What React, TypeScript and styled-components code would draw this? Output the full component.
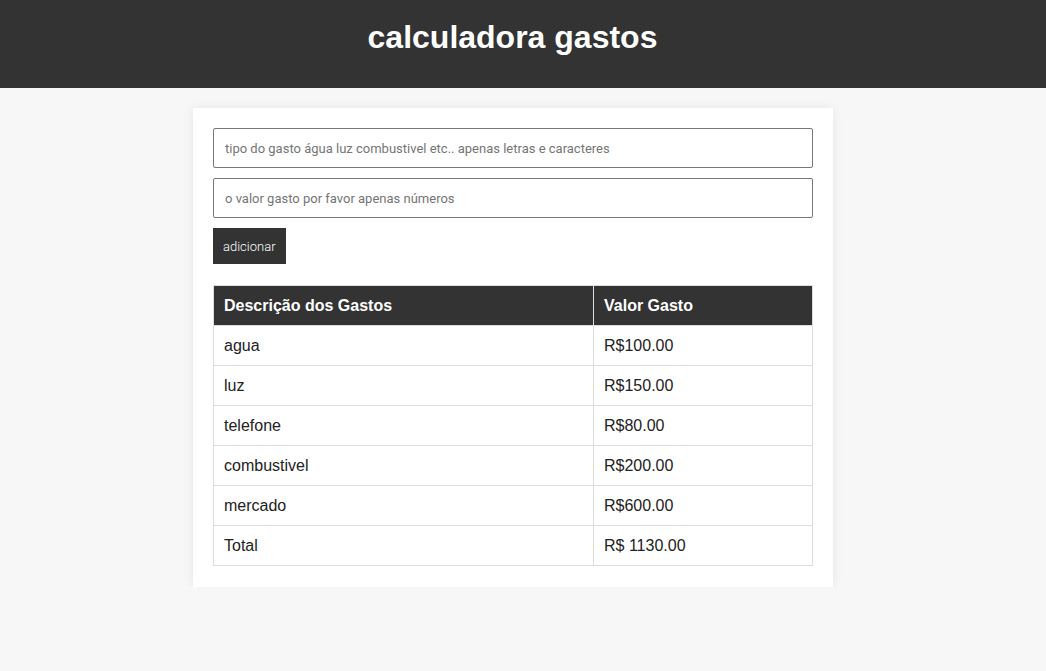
import styled, { createGlobalStyle } from 'styled-components';

const GlobalStyle = createGlobalStyle`
	body {
		margin: 0;
		background: #f7f7f7;
		font-family: 'Liberation Sans', Arial, sans-serif;
	}
`;

const StyledHeader = styled.header`
	background: #333;
	height: 88px;
	display: flex;
	align-items: center;
	justify-content: center;
	padding-right: 21px;
	box-sizing: border-box;
`;

const StyledTitle = styled.h1`
	margin: 0 0 14px;
	color: #fff;
	font-size: 32px;
	font-weight: 700;
`;

const StyledPage = styled.div`
	padding-right: 20px;
`;

const StyledCard = styled.main`
	width: 640px;
	margin: 20px auto 0;
	background: #fff;
	padding: 20px 20px 21px;
	box-sizing: border-box;
	box-shadow: 0 0 10px rgba(0, 0, 0, 0.08);
`;

const StyledForm = styled.form`
	display: flex;
	flex-direction: column;
	align-items: flex-start;
	gap: 10px;
	margin-bottom: 21px;
`;

const StyledInput = styled.input`
	width: 100%;
	height: 40px;
	box-sizing: border-box;
	border: 1px solid #777;
	border-radius: 2px;
	padding: 0 11px;
	font-family: Roboto, sans-serif;
	font-size: 13px;
	font-weight: 400;
	&::placeholder {
		color: #757575;
	}
`;

const StyledButton = styled.button`
	height: 36px;
	padding: 0 10px;
	border: none;
	background: #333;
	color: #fff;
	font-family: Roboto, sans-serif;
	font-size: 13px;
	font-weight: 300;
`;

const StyledTable = styled.table`
	width: 100%;
	border-collapse: collapse;
	font-size: 16px;
`;

const StyledTh = styled.th<{ $width?: number }>`
	background: #333;
	color: #fff;
	text-align: left;
	font-weight: 700;
	height: 40px;
	padding: 0 10px;
	border: 1px solid #ddd;
	width: ${({ $width }) => ($width ? `${$width}px` : 'auto')};
	box-sizing: border-box;
`;

const StyledTd = styled.td`
	height: 40px;
	padding: 1px 10px 0;
	border: 1px solid #ddd;
	color: #222;
	box-sizing: border-box;
`;

const gastos = [
	{ tipo: 'agua', valor: 'R$100.00' },
	{ tipo: 'luz', valor: 'R$150.00' },
	{ tipo: 'telefone', valor: 'R$80.00' },
	{ tipo: 'combustivel', valor: 'R$200.00' },
	{ tipo: 'mercado', valor: 'R$600.00' },
	{ tipo: 'Total', valor: 'R$ 1130.00' },
];

const App = () => {
	return (
		<>
			<GlobalStyle />
			<StyledHeader>
				<StyledTitle>calculadora gastos</StyledTitle>
			</StyledHeader>
			<StyledPage>
				<StyledCard>
					<StyledForm onSubmit={(e) => e.preventDefault()}>
						<StyledInput placeholder="tipo do gasto água luz combustivel etc.. apenas letras e caracteres" />
						<StyledInput placeholder="o valor gasto por favor apenas números" />
						<StyledButton>adicionar</StyledButton>
					</StyledForm>
					<StyledTable>
						<thead>
							<tr>
								<StyledTh $width={380}>Descrição dos Gastos</StyledTh>
								<StyledTh>Valor Gasto</StyledTh>
							</tr>
						</thead>
						<tbody>
							{gastos.map((g) => (
								<tr key={g.tipo}>
									<StyledTd>{g.tipo}</StyledTd>
									<StyledTd>{g.valor}</StyledTd>
								</tr>
							))}
						</tbody>
					</StyledTable>
				</StyledCard>
			</StyledPage>
		</>
	);
};

export default App;
